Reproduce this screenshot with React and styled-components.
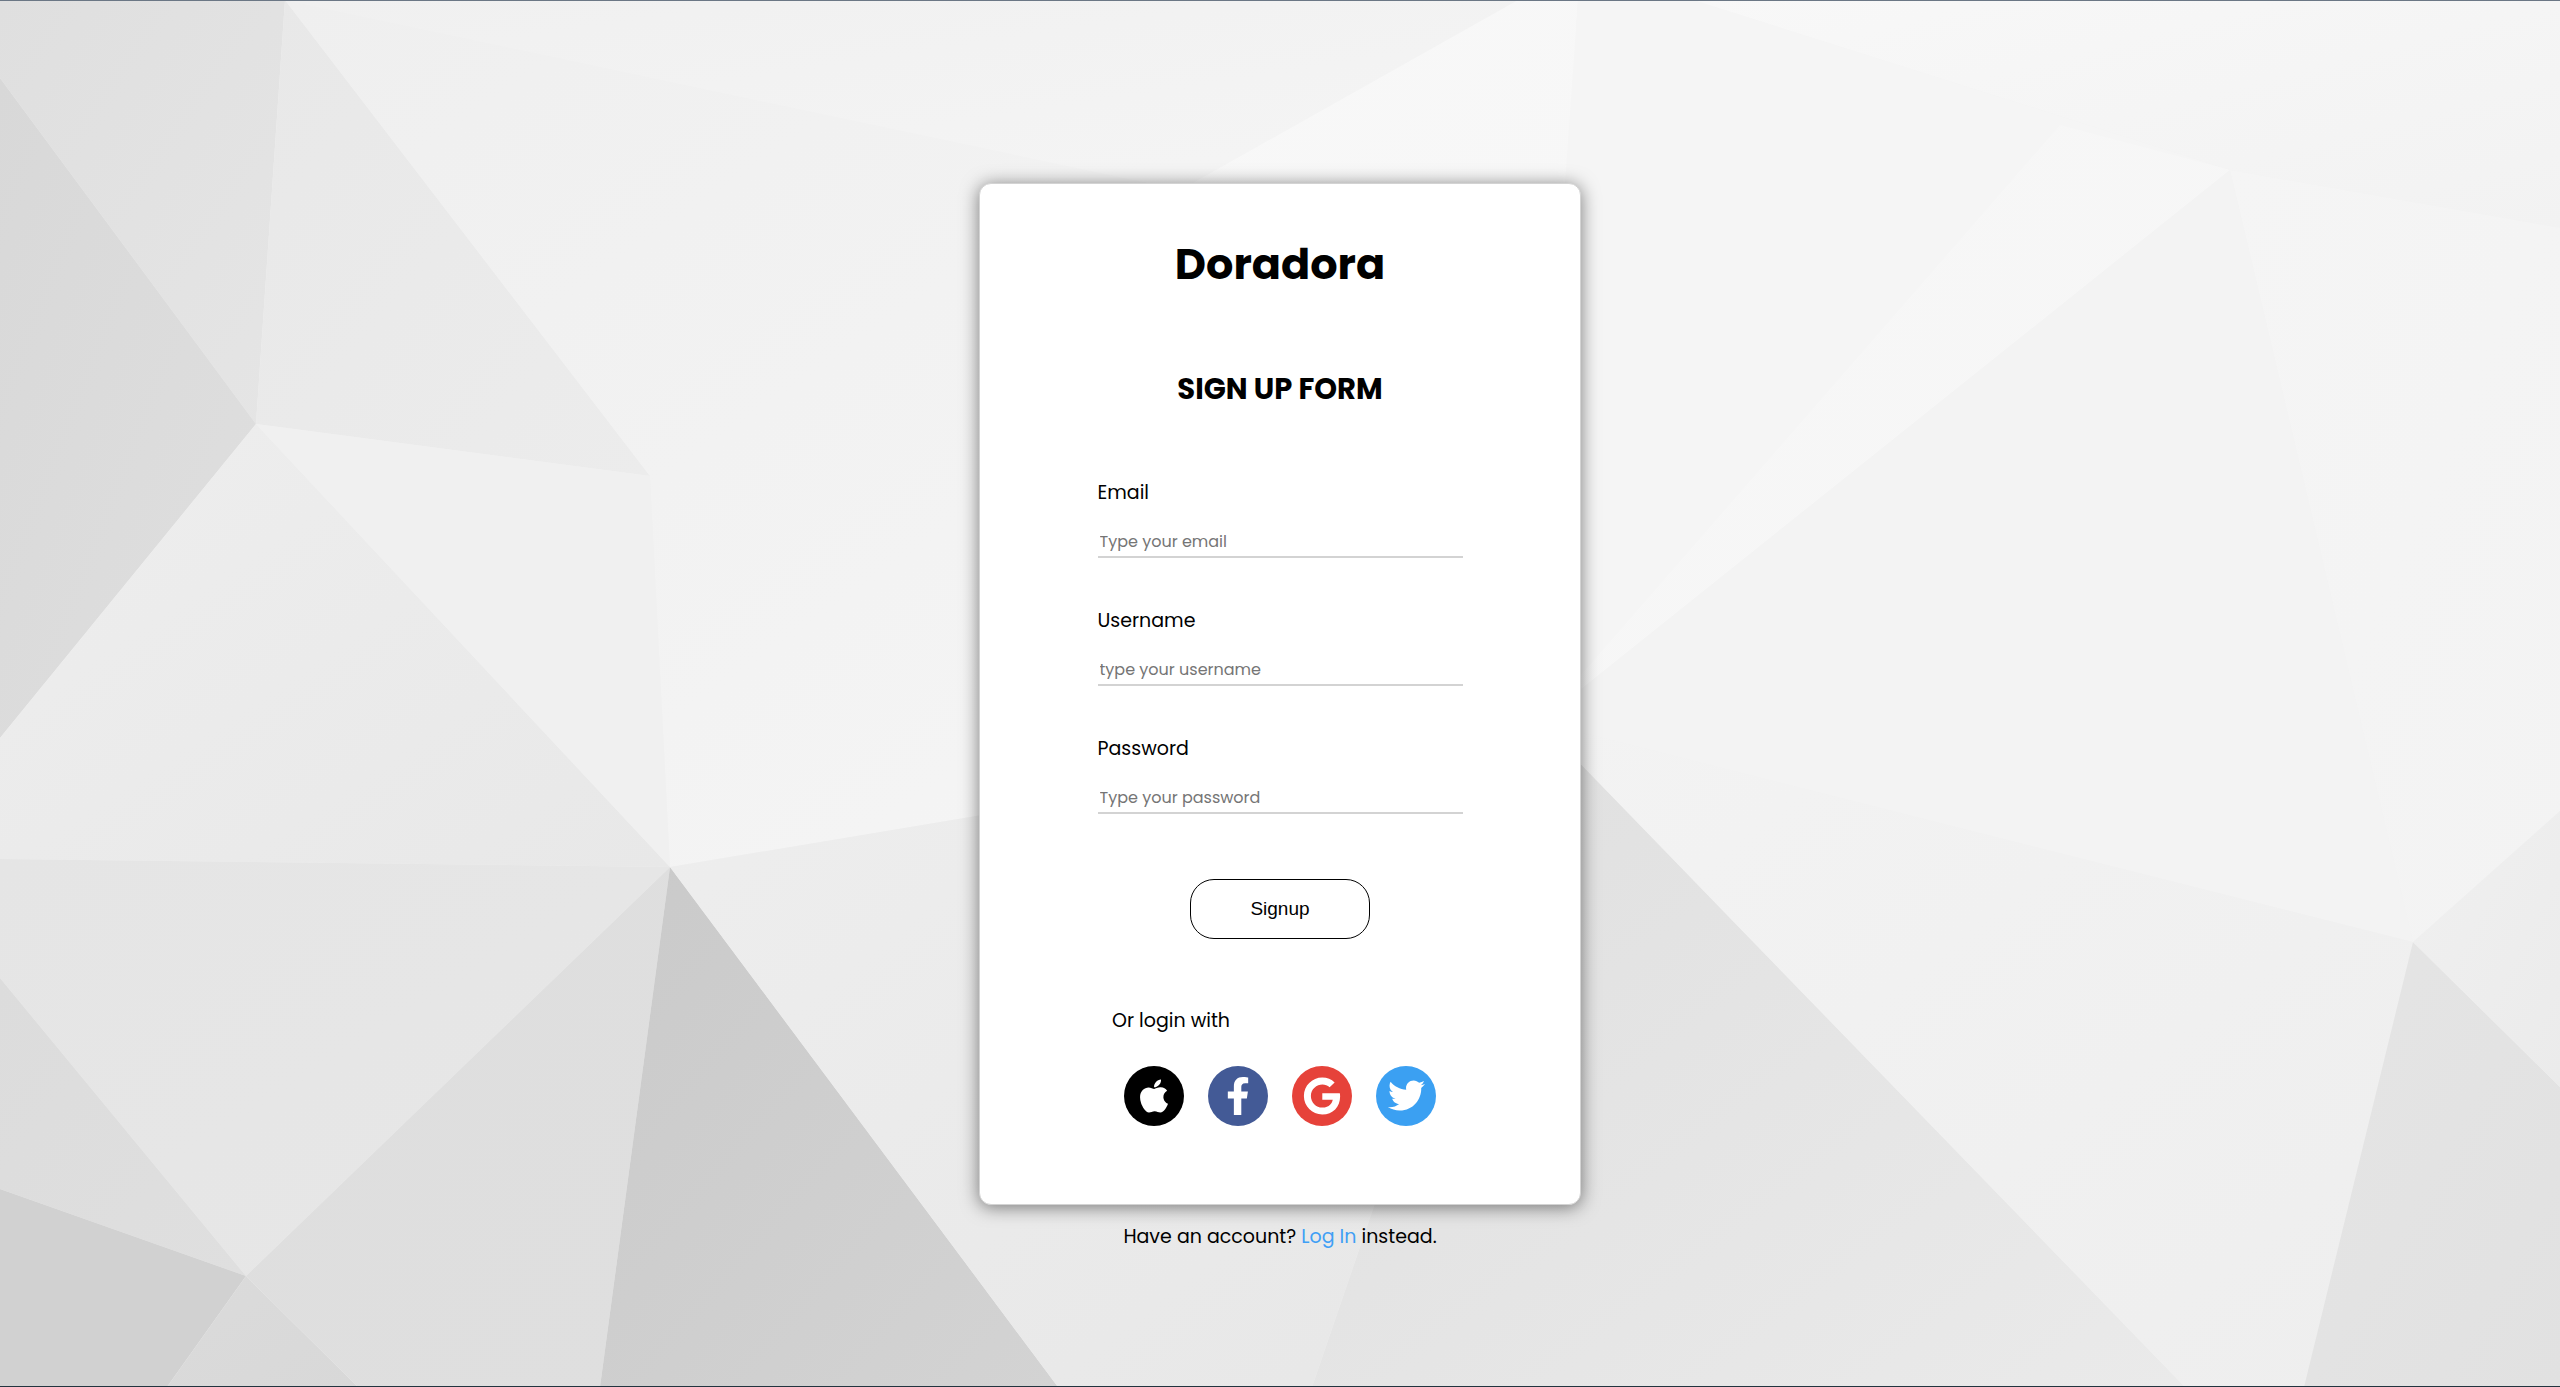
import React from "react";
import styled, { createGlobalStyle } from "styled-components";
import { FaApple, FaFacebookF, FaGoogle, FaTwitter } from "react-icons/fa";

const GlobalStyle = createGlobalStyle`
  *, *::before, *::after { box-sizing: border-box; }
  body {
    margin: 0;
    color: #000;
    font-family: Poppins, Inter, "Open Sans", sans-serif;
    font-size: 19px;
    line-height: 30px;
  }
`;

const Page = styled.div`
  position: relative;
  min-height: 100vh;
  display: grid;
  grid-template-rows: 1fr auto 1fr;
  justify-items: center;
  border-top: 1px solid #6b7785;
  border-bottom: 1px solid #22343f;
  overflow: hidden;
`;

const Backdrop = styled.svg`
  position: absolute;
  inset: 0;
  z-index: -1;
  width: 100%;
  height: 100%;
`;

const Card = styled.main`
  grid-row: 2;
  width: 602px;
  max-width: 100%;
  padding: 50px 48px 78px;
  display: flex;
  flex-direction: column;
  align-items: center;
  background: #fff;
  border: 1px solid #d3d3d3;
  border-radius: 12px;
  box-shadow: 0 2px 18px rgba(0, 0, 0, 0.5);
`;

const Brand = styled.h1`
  margin: 0 0 75px;
  font-size: 43px;
  line-height: 60px;
  font-weight: 700;
`;

const Form = styled.form`
  width: 365px;
  max-width: 100%;
  display: flex;
  flex-direction: column;
  align-items: center;
`;

const FormTitle = styled.h2`
  margin: 0 0 69px;
  font-size: 29px;
  line-height: 40px;
  font-weight: 700;
  text-transform: uppercase;
  white-space: nowrap;
`;

const Fields = styled.div`
  width: 100%;
  display: flex;
  flex-direction: column;
  gap: 48px;
`;

const Field = styled.div`
  display: flex;
  flex-direction: column;
  gap: 16px;
`;

const Input = styled.input`
  height: 34px;
  padding: 3px 2px 0;
  border: 0;
  border-bottom: 2px solid #d3d3d3;
  background: transparent;
  font: inherit;
  font-size: 16px;
  outline: none;
  &::placeholder { color: #757575; opacity: 1; }
`;

const SubmitButton = styled.button`
  width: 180px;
  height: 60px;
  margin: 65px 0 67px;
  border: 1px solid #000;
  border-radius: 24px;
  background: #fff;
  color: #000;
  font: 19px "Liberation Sans", Arial, sans-serif;
  cursor: pointer;
`;

const Social = styled.section`
  display: flex;
  flex-direction: column;
  gap: 30px;
`;

const SocialRow = styled.div`
  display: flex;
  gap: 24px;
  padding: 0 12px;
`;

const SocialLink = styled.a`
  width: 60px;
  height: 60px;
  display: grid;
  place-items: center;
  border-radius: 50%;
  background: ${(p) => p.$color};
  color: #fff;
`;

const SwitchLine = styled.p`
  grid-row: 3;
  margin: 17px 0 0;
`;

const LoginLink = styled.a`
  color: #409ff5;
  text-decoration: none;
`;

const FACETS = [
  ["0,0 285,0 256,424 0,78", "#dfdfdf", "#e5e5e5"],
  ["0,78 256,424 0,738", "#d8d8d8", "#dfdfdf"],
  ["285,0 650,476 256,424", "#e8e8e8", "#ececec"],
  ["285,0 1180,190 1540,722 670,867 650,476", "#efefef", "#f6f6f6"],
  ["285,0 1518,0 1180,190", "#f0f0f0", "#f5f5f5"],
  ["1518,0 1578,0 1565,240 1180,190", "#f8f8f8", "#f7f7f7"],
  ["1578,0 1693,0 2230,170 1540,722 1565,183", "#f5f5f5", "#f5f5f5"],
  ["2060,125 2230,170 1540,722", "#f7f7f7", "#f6f6f6"],
  ["1693,0 2560,0 2560,228 2230,170", "#f8f8f8", "#f2f2f2"],
  ["2230,170 2560,228 2560,811 2413,942", "#f5f5f5", "#f3f3f3"],
  ["2230,170 2413,942 1540,722", "#f3f3f3", "#f3f3f3"],
  ["256,424 0,738 0,859 670,867", "#eeeeee", "#e8e8e8"],
  ["256,424 650,476 670,867", "#f0f0f0", "#f0f0f0"],
  ["0,859 670,867 246,1276 0,978", "#e5e5e5", "#e7e7e7"],
  ["0,978 246,1276 0,1189", "#dcdcdc", "#dfdfdf"],
  ["0,1189 246,1276 167,1387 0,1387", "#d1d1d1", "#d1d1d1"],
  ["246,1276 358,1387 167,1387", "#dbdbdb", "#d8d8d8"],
  ["670,867 246,1276 358,1387 600,1387", "#dedede", "#dfdfdf"],
  ["670,867 1058,1387 600,1387", "#cacaca", "#d3d3d3"],
  ["670,867 1540,722 1312,1387 1058,1387", "#eeeeee", "#e7e7e7"],
  ["1540,722 2185,1387 1312,1387", "#dfdfdf", "#eaeaea"],
  ["1540,722 2413,942 2304,1387 2185,1387", "#f3f3f3", "#eeeeee"],
  ["2413,942 2560,1087 2560,1387 2304,1387", "#e5e5e5", "#e1e1e1"],
  ["2413,942 2560,811 2560,1087", "#f0f0f0", "#ebebeb"],
];

const FIELDS = [
  { id: "email", label: "Email", type: "email", placeholder: "Type your email" },
  { id: "username", label: "Username", type: "text", placeholder: "type your username" },
  { id: "password", label: "Password", type: "password", placeholder: "Type your password" },
];

const NETWORKS = [
  { name: "Apple", color: "#000000", Icon: FaApple, size: 38 },
  { name: "Facebook", color: "#435a96", Icon: FaFacebookF, size: 38 },
  { name: "Google", color: "#e6423a", Icon: FaGoogle, size: 38 },
  { name: "Twitter", color: "#3ba0f2", Icon: FaTwitter, size: 37 },
];

function FacetBackdrop() {
  return (
    <Backdrop viewBox="0 0 2560 1387" preserveAspectRatio="xMidYMid slice" aria-hidden="true">
      <defs>
        {FACETS.map(([, from, to], i) => (
          <linearGradient key={i} id={`facet-${i}`} x1="0" y1="0" x2="1" y2="1">
            <stop offset="0" stopColor={from} />
            <stop offset="1" stopColor={to} />
          </linearGradient>
        ))}
      </defs>
      <rect width="2560" height="1387" fill="#f1f1f1" />
      {FACETS.map(([points], i) => (
        <polygon key={i} points={points} fill={`url(#facet-${i})`} />
      ))}
    </Backdrop>
  );
}

export default function App() {
  return (
    <>
      <GlobalStyle />
      <Page>
        <FacetBackdrop />
        <Card>
          <Brand>Doradora</Brand>
          <Form onSubmit={(e) => e.preventDefault()}>
            <FormTitle>Sign up form</FormTitle>
            <Fields>
              {FIELDS.map(({ id, label, type, placeholder }) => (
                <Field key={id}>
                  <label htmlFor={id}>{label}</label>
                  <Input id={id} name={id} type={type} placeholder={placeholder} />
                </Field>
              ))}
            </Fields>
            <SubmitButton type="submit">Signup</SubmitButton>
          </Form>
          <Social>
            <span>Or login with</span>
            <SocialRow>
              {NETWORKS.map(({ name, color, Icon, size }) => (
                <SocialLink key={name} href={`#${name.toLowerCase()}`} aria-label={name} $color={color}>
                  <Icon size={size} />
                </SocialLink>
              ))}
            </SocialRow>
          </Social>
        </Card>
        <SwitchLine>
          Have an account? <LoginLink href="#login">Log In</LoginLink> instead.
        </SwitchLine>
      </Page>
    </>
  );
}
